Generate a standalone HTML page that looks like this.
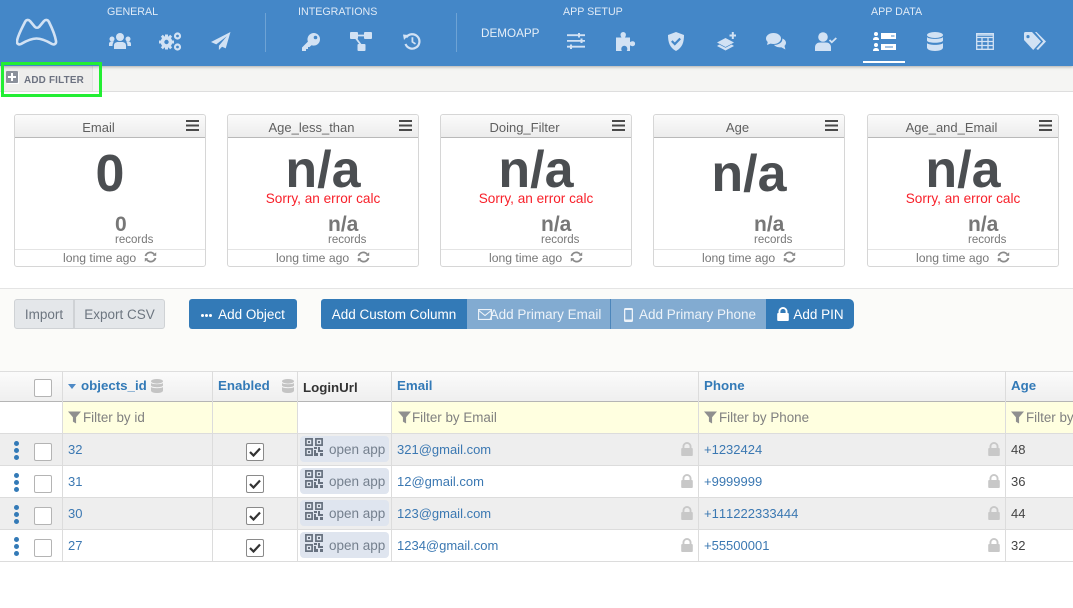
<!DOCTYPE html>
<html><head><meta charset="utf-8">
<style>
html,body{margin:0;padding:0;background:#fff;}
#p{position:relative;width:1073px;height:608px;overflow:hidden;background:#fff;font-family:"Liberation Sans",sans-serif;color:#444;}
#p div,#p span.a,#p svg.a{position:absolute;}
.t{white-space:nowrap;line-height:16px;}
.hl{font-size:10.7px;color:#dfeaf6;}
.ic{color:#d2e2f4;fill:#d2e2f4;}
.card{width:190px;height:151px;background:#fff;border:1px solid #d6d6d6;border-radius:3px;}
.ch{left:0;top:0;width:190px;height:22px;background:linear-gradient(#fbfbfb,#ececec);border-bottom:1px solid #b9b9b9;border-radius:3px 3px 0 0;}
.ct{left:0;top:5px;width:167px;text-align:center;font-size:13px;color:#5f5f5f;}
.hb{left:171px;top:5px;width:13px;height:2px;background:#4a4a4a;box-shadow:0 4.500px 0 #4a4a4a,0 9px 0 #4a4a4a;}
.big{left:0;width:190px;text-align:center;font-weight:bold;color:#4b4e51;white-space:nowrap;}
.err{left:0;top:76px;width:190px;text-align:center;font-size:13.600px;color:#f8202a;}
.sm{top:100px;font-size:21px;font-weight:bold;color:#777;line-height:20px;white-space:nowrap;}
.rec{top:118px;font-size:11.500px;color:#777;line-height:14px;}
.cl{left:0;top:134px;width:190px;height:1px;background:#e4e4e4;}
.lt{left:48px;top:135px;font-size:12.200px;color:#777;}
.btn{top:299px;height:30px;line-height:32px;font-size:13.500px;text-align:center;white-space:nowrap;box-sizing:border-box;}
.b1{background:#337ab7;color:#fff;}
.b2{background:#82abd1;color:#edf3f9;}
.vl{width:1px;top:371px;height:190px;background:#dcdcdc;}
.hd{top:378px;font-size:13.300px;font-weight:bold;color:#337ab7;}
.fl{top:410px;font-size:13.400px;color:#808080;}
.r{left:0;width:1073px;height:31px;border-bottom:1px solid #dcdcdc;}
.lk{font-size:13px;color:#3b78b2;font-kerning:none;}
.cb{left:34px;width:16px;height:16px;border:1px solid #b4b4b4;border-radius:2px;background:#fff;}
.ck{left:246px;width:16px;height:16px;border:1px solid #8a8a8a;border-radius:2px;background:#fff;}
.qr{left:300px;width:89px;height:26px;background:#dfe5ef;border-radius:4px;font-size:13.500px;color:#75808e;line-height:28px;text-indent:29px;white-space:nowrap;}
.dt{left:14px;width:5px;height:5px;background:#337ab7;border-radius:50%;box-shadow:0 7px 0 #337ab7,0 -7px 0 #337ab7;}
</style></head><body>
<div id="p">
<svg width="0" height="0" style="position:absolute"><defs>
<symbol id="lock" viewBox="0 0 12 14"><path d="M1.500 6V4.500a4.500 4.500 0 0 1 9 0V6h.3a1 1 0 0 1 1 1v6a1 1 0 0 1-1 1H1.200a1 1 0 0 1-1-1V7a1 1 0 0 1 1-1zM3.400 6h5.200V4.500a2.600 2.600 0 0 0-5.200 0z"/></symbol>
<symbol id="fun" viewBox="0 0 14 13"><path d="M0 0h14L8.700 6.200V13L5.300 11V6.200z"/></symbol>
<symbol id="db" viewBox="0 0 12 14"><ellipse cx="6" cy="2.300" rx="6" ry="2.300"/><path d="M0 4c1 1.600 11 1.600 12 0v2.400c0 2.400-12 2.400-12 0zM0 8c1 1.600 11 1.600 12 0v3.600C12 14.800 0 14.800 0 11.600z"/></symbol>
<symbol id="qr" viewBox="0 0 18 18"><path fill="none" stroke="#67717f" stroke-width="1.700" d="M.9.900h6.200v6.200H.9zM10.900.900h6.200v6.200h-6.200zM.9 10.900h6.200v6.200H.9z"/><path fill="#67717f" d="M3 3h2v2H3zM13 3h2v2h-2zM3 13h2v2H3zM9 9h3v2H9zM13 9h2v3h3v2h-5zM9 12h2v3h2v3H9zM15 15h3v3h-3z"/></symbol>
<symbol id="rf" viewBox="0 0 13 12"><path fill="none" stroke="#8a8a8a" stroke-width="1.800" d="M1.500 5C2.300 2.300 5 .9 7.500 1.500c1.200.3 2 .9 2.700 1.900M11.500 7c-.8 2.700-3.500 4.100-6 3.500-1.200-.3-2-.9-2.700-1.900"/><path fill="#8a8a8a" d="M8.700 4.700L12.200 4.900 12.200 1.200zM4.300 7.300L.8 7.100.8 10.800z"/></symbol>
</defs></svg>

<!-- top nav -->
<div style="left:0;top:0;width:1073px;height:66px;background:#4487c8;box-shadow:0 1px 3px rgba(0,0,0,.3);z-index:2;">
<svg class="a" style="left:16px;top:18px" width="42" height="29" viewBox="0 0 42 29"><path fill="none" stroke="#d2e2f4" stroke-width="2.600" stroke-linejoin="round" d="M9 4C10 1.500 12.500 1.500 14 3L19 9C20 10 22 10 23 9L28 3C29.500 1.500 32 1.500 33 4C36 10 39 17 40 23C40.500 26 38 27 36 26C31 23 26 20.500 20.500 20.500C15 20.500 10 23 5 26C3 27 .5 26 1 23C2 17 6 10 9 4Z"/></svg>
<span class="a t hl" style="left:107px;top:4px">GENERAL</span>
<span class="a t hl" style="left:298px;top:4px">INTEGRATIONS</span>
<span class="a t hl" style="left:563px;top:4px">APP SETUP</span>
<span class="a t hl" style="left:871px;top:4px">APP DATA</span>
<span class="a t" style="left:481px;top:26px;font-size:11.700px;color:#e6eff8">DEMOAPP</span>
<div style="left:265px;top:13px;width:1px;height:39px;background:#6ea3d5"></div>
<div style="left:456px;top:13px;width:1px;height:39px;background:#6ea3d5"></div>

<!-- people -->
<svg class="a ic" style="left:109px;top:33px" width="22" height="17" viewBox="0 0 22 17"><circle cx="11" cy="4" r="4"/><circle cx="3" cy="6" r="2.500"/><circle cx="19" cy="6" r="2.500"/><path d="M5 16v-3.500C5 10 7 9 9 9h4c2 0 4 1 4 3.500V16zM0 13v-2c0-1.500 1-2.500 2.500-2.500H5c-1 1-1.500 2.500-1.500 4.500zM22 13v-2c0-1.500-1-2.500-2.500-2.500H17c1 1 1.500 2.500 1.500 4.500z"/></svg>
<!-- gears -->
<svg class="a ic" style="left:159px;top:32px" width="23" height="19" viewBox="0 0 23 19"><circle cx="7.500" cy="10" r="4" fill="none" stroke="#d2e2f4" stroke-width="3.600"/><path d="M6 2.500h3v3H6zM6 14.500h3v3H6zM0 8.500h3v3H0zM12 8.500h3v3h-3zM1.800 4.800l2-2 2 2-2 2zM11.200 13.200l2 2-2 2-2-2zM1.800 15.200l2-2 2 2-2 2zM11.200 2.800l2 2-2 2-2-2z"/><circle cx="18.500" cy="4" r="2.500" fill="none" stroke="#d2e2f4" stroke-width="2.200"/><circle cx="18.500" cy="15" r="2.500" fill="none" stroke="#d2e2f4" stroke-width="2.200"/></svg>
<!-- plane -->
<svg class="a ic" style="left:211px;top:32px" width="20" height="18" viewBox="0 0 19 17"><path d="M18.500 0L0 9.500l5 2.200L15 4 7.500 13v4l3-3 3.500 1.500z"/></svg>
<!-- key -->
<svg class="a ic" style="left:302px;top:33px" width="18" height="18" viewBox="0 0 18 18"><path fill-rule="evenodd" d="M11.500 0A6.300 6.300 0 0 1 18 6.300a6.300 6.300 0 0 1-8.500 5.900L7.500 14H6v2H4v2H0v-3.500l5.900-5.900A6.300 6.300 0 0 1 11.500 0zM13.500 2.700a1.800 1.800 0 1 0 0 3.600 1.800 1.800 0 0 0 0-3.600z"/></svg>
<!-- nodes -->
<svg class="a ic" style="left:350px;top:32px" width="22" height="19" viewBox="0 0 22 19"><rect x="0" y="0" width="8" height="7" rx="1"/><rect x="14" y="0" width="8" height="7" rx="1"/><rect x="7.500" y="12" width="8" height="7" rx="1"/><path fill="none" stroke="#d2e2f4" stroke-width="1.800" d="M6 3.500h10M5 5l6 8"/></svg>
<!-- history -->
<svg class="a ic" style="left:403px;top:33px" width="18" height="17" viewBox="0 0 18 17"><path fill="none" stroke="#d2e2f4" stroke-width="2.200" d="M3.200 4.500A7.200 7.200 0 1 1 2.500 11"/><path d="M0 1.500L5.500 2 1 7zM8.500 4.300h1.800v4.200l2.700 1.800-1 1.300-3.500-2.300z"/></svg>
<!-- sliders -->
<svg class="a ic" style="left:567px;top:33px" width="18" height="17" viewBox="0 0 18 17"><path d="M0 1.300h18V3.100H0zM0 7h18v1.800H0zM0 12.800h18v1.800H0z"/><rect x="11" y="0" width="2" height="4.500"/><rect x="13.500" y="5.500" width="2" height="4.500"/><rect x="3" y="11.500" width="2" height="4.500"/></svg>
<!-- puzzle -->
<svg class="a ic" style="left:616px;top:32px" width="20" height="19" viewBox="0 0 20 19"><path d="M0 5.500h5.500C5 4.500 4.500 3.800 4.500 2.700a2.700 2.700 0 0 1 5.400 0c0 1.100-.5 1.800-1 2.800H14v4.600c1-.6 1.600-.9 2.600-.9a2.500 2.500 0 0 1 0 5c-1 0-1.600-.3-2.600-.9V19h-3.300c.6-1 .6-1.500.6-2.300a3 3 0 0 0-6 0c0 .8 0 1.300.6 2.300H0z"/></svg>
<!-- shield -->
<svg class="a ic" style="left:668px;top:32px" width="16" height="19" viewBox="0 0 16 19"><path d="M8 0l8 3c0 7-1.500 12.500-8 16C1.500 15.500 0 10 0 3z"/><path fill="none" stroke="#4487c8" stroke-width="2.200" d="M3.800 9l3 3 5.400-5.500"/></svg>
<!-- layers plus -->
<svg class="a ic" style="left:717px;top:32px" width="19" height="19" viewBox="0 0 19 19"><path d="M0 10.500L8.500 6l8.500 4.500-8.500 4.500zM2.300 12.500L0 14l8.500 4.500L17 14l-2.300-1.500-6.200 3.300z"/><path d="M12.500 2.500h2.300V0h2v2.500h2.200v2h-2.200V7h-2V4.500h-2.300z"/></svg>
<!-- comments -->
<svg class="a ic" style="left:766px;top:33px" width="20" height="17" viewBox="0 0 20 17"><ellipse cx="7.500" cy="5.500" rx="7.500" ry="5.500"/><path d="M2 8l-1 4 5-2z"/><path d="M16.300 5.500c2.200.8 3.700 2.400 3.700 4.300 0 1.200-.6 2.300-1.500 3.100l.9 3.600-4.200-2.200c-3 .4-5.900-.6-7.200-2.500 4.500.3 9-2.500 8.300-6.300z"/></svg>
<!-- user check -->
<svg class="a ic" style="left:815px;top:32px" width="22" height="19" viewBox="0 0 22 19"><circle cx="8" cy="5" r="4.800"/><path d="M0 19v-3.500C0 12 2.500 10.500 5 10.500h6c2.500 0 5 1.500 5 5V19z"/><path fill="none" stroke="#d2e2f4" stroke-width="1.800" d="M14.500 8l2.300 2.300L21.300 6"/></svg>
<!-- list active -->
<svg class="a" fill="#fff" style="left:873px;top:32px" width="23" height="19" viewBox="0 0 23 19"><circle cx="3" cy="2" r="2"/><path d="M0 8c0-2 1-3 3-3s3 1 3 3z"/><circle cx="3" cy="13" r="2"/><path d="M0 19c0-2 1-3 3-3s3 1 3 3z"/><path fill-rule="evenodd" d="M8 1h15v6H8zM18 3.500v1h3.500v-1zM8 12h15v6H8zM12 14.500v1h8v-1z"/></svg>
<div style="left:863px;top:61px;width:42px;height:2px;background:#fff"></div>
<!-- database -->
<svg class="a ic" style="left:927px;top:32px" width="16" height="19" viewBox="0 0 16 19"><ellipse cx="8" cy="3" rx="8" ry="3"/><path d="M0 5c1.500 2.500 14.500 2.500 16 0v3.500c0 3-16 3-16 0zM0 11c1.500 2.500 14.500 2.500 16 0v4.500c0 4.600-16 4.600-16 0z"/></svg>
<!-- table -->
<svg class="a ic" style="left:976px;top:33px" width="18" height="17" viewBox="0 0 18 17"><path fill="none" stroke="#d2e2f4" stroke-width="1.300" d="M.7.700h16.600v15.600H.7zM.7 4.500h16.600M.7 8.500h16.600M.7 12.500h16.600M6 4v12M12 4v12"/><path d="M0 0h18v3H0z" opacity=".7"/></svg>
<!-- tags -->
<svg class="a ic" style="left:1024px;top:32px" width="22" height="19" viewBox="0 0 22 19"><path fill-rule="evenodd" d="M1.500 0H8l9 9.500-7.800 8.500L0 8V1.500A1.500 1.500 0 0 1 1.500 0zM4 3a1.600 1.600 0 1 0 0 3.200A1.600 1.600 0 0 0 4 3z"/><path d="M11 0h1.500L22 9.500 14 18l-1.700-1.100 6.800-7.400z"/></svg>
</div>

<!-- filter bar -->
<div style="left:0;top:66px;width:1073px;height:25px;background:#f5f5f3;border-bottom:1px solid #dedede"></div>
<div style="left:0;top:66px;width:92px;height:25px;background:#eeeeec;border-right:1px solid #e2e2e2"></div>
<div style="left:6px;top:71px;width:12px;height:12px;background:#8b919b;border-radius:1px;box-shadow:1px 1px 0 #fff"></div>
<div style="left:8px;top:76px;width:8px;height:2px;background:#fff"></div>
<div style="left:11px;top:73px;width:2px;height:8px;background:#fff"></div>
<span class="a t" style="left:24px;top:73px;font-size:9.900px;font-weight:bold;color:#6c7280;letter-spacing:.2px">ADD FILTER</span>
<div style="left:1px;top:62px;width:95px;height:29px;border:3px solid #22ee33;z-index:3"></div>

<!-- cards -->
<div class="card" style="left:14px;top:114px"><div class="ch"></div><span class="a t ct">Email</span><div class="hb"></div>
<div class="big" style="top:29px;font-size:52px;line-height:60px">0</div>
<div class="sm" style="left:100px">0</div><span class="a t rec" style="left:100px">records</span><div class="cl"></div><span class="a t lt">long time ago</span><svg class="a" style="left:129px;top:136px" width="13" height="12"><use href="#rf"/></svg></div>

<div class="card" style="left:227px;top:114px"><div class="ch"></div><span class="a t ct">Age_less_than</span><div class="hb"></div>
<div class="big" style="top:25px;font-size:52px;line-height:60px">n/a</div><span class="a t err">Sorry, an error calc</span>
<div class="sm" style="left:100px">n/a</div><span class="a t rec" style="left:100px">records</span><div class="cl"></div><span class="a t lt">long time ago</span><svg class="a" style="left:129px;top:136px" width="13" height="12"><use href="#rf"/></svg></div>

<div class="card" style="left:440px;top:114px"><div class="ch"></div><span class="a t ct">Doing_Filter</span><div class="hb"></div>
<div class="big" style="top:25px;font-size:52px;line-height:60px">n/a</div><span class="a t err">Sorry, an error calc</span>
<div class="sm" style="left:100px">n/a</div><span class="a t rec" style="left:100px">records</span><div class="cl"></div><span class="a t lt">long time ago</span><svg class="a" style="left:129px;top:136px" width="13" height="12"><use href="#rf"/></svg></div>

<div class="card" style="left:653px;top:114px"><div class="ch"></div><span class="a t ct">Age</span><div class="hb"></div>
<div class="big" style="top:29px;font-size:52px;line-height:60px">n/a</div>
<div class="sm" style="left:100px">n/a</div><span class="a t rec" style="left:100px">records</span><div class="cl"></div><span class="a t lt">long time ago</span><svg class="a" style="left:129px;top:136px" width="13" height="12"><use href="#rf"/></svg></div>

<div class="card" style="left:867px;top:114px"><div class="ch"></div><span class="a t ct">Age_and_Email</span><div class="hb"></div>
<div class="big" style="top:25px;font-size:52px;line-height:60px">n/a</div><span class="a t err">Sorry, an error calc</span>
<div class="sm" style="left:100px">n/a</div><span class="a t rec" style="left:100px">records</span><div class="cl"></div><span class="a t lt">long time ago</span><svg class="a" style="left:129px;top:136px" width="13" height="12"><use href="#rf"/></svg></div>

<!-- action area -->
<div style="left:0;top:288px;width:1073px;height:83px;background:#fbfbf9;border-top:1px solid #e4e4e4;box-sizing:border-box"></div>
<div class="btn" style="left:14px;width:60px;background:#e4e7ea;color:#6d7680;border:1px solid #cfd2d5;border-radius:3px 0 0 3px;line-height:30px">Import</div>
<div class="btn" style="left:74px;width:91px;background:#e4e7ea;color:#6d7680;border:1px solid #cfd2d5;border-left:1px solid #cfd2d5;border-radius:0 3px 3px 0;line-height:30px">Export CSV</div>
<div class="btn b1" style="left:189px;width:108px;border-radius:3px;padding-left:17px">Add Object</div>
<div style="left:201px;top:314px;width:3px;height:3px;border-radius:50%;background:#fff;box-shadow:4px 0 0 #fff,8px 0 0 #fff"></div>
<div class="btn b1" style="left:321px;width:146px;border-radius:3px 0 0 3px">Add Custom Column</div>
<div class="btn b2" style="left:467px;width:144px;border-right:1px solid #4c86bb;padding-left:14px">Add Primary Email</div>
<svg class="a" style="left:478px;top:309px" width="14" height="11" viewBox="0 0 14 11"><path fill="none" stroke="#edf3f9" stroke-width="1.100" d="M.6.600h12.800v9.800H.6zM.8 1.500L7 6.500l6.200-5"/></svg>
<div class="btn b2" style="left:611px;width:155px;padding-left:18px">Add Primary Phone</div>
<svg class="a" style="left:624px;top:308px" width="9" height="14" viewBox="0 0 9 14"><path fill="#edf3f9" fill-rule="evenodd" d="M1.500 0h6A1.500 1.500 0 0 1 9 1.500v11A1.500 1.500 0 0 1 7.500 14h-6A1.500 1.500 0 0 1 0 12.500v-11A1.500 1.500 0 0 1 1.500 0zM1.300 2v9.500h6.400V2z"/></svg>
<div class="btn b1" style="left:766px;width:88px;border-radius:0 5px 5px 0;padding-left:17px">Add PIN</div>
<svg class="a" fill="#fff" style="left:777px;top:307px" width="12" height="14"><use href="#lock"/></svg>

<!-- table head -->
<div style="left:0;top:371px;width:1073px;background:linear-gradient(#fbfbfb,#efefef);border-top:1px solid #dedede;border-bottom:1px solid #b5b5b5;height:29px"></div>
<div style="left:0;top:402px;width:1073px;background:#fff;border-bottom:1px solid #dcdcdc;box-sizing:border-box;height:32px"></div>
<div style="left:63px;top:402px;width:1010px;height:31px;background:#ffffe0"></div>
<div style="left:298px;top:402px;width:93px;height:31px;background:#fff"></div>

<!-- rows -->
<div class="r" style="top:434px;background:#eeeeee"></div>
<div class="r" style="top:466px;background:#fff"></div>
<div class="r" style="top:498px;background:#eeeeee"></div>
<div class="r" style="top:530px;background:#fff"></div>

<div class="vl" style="left:62px"></div><div class="vl" style="left:212px"></div><div class="vl" style="left:297px"></div><div class="vl" style="left:391px"></div><div class="vl" style="left:698px"></div><div class="vl" style="left:1005px"></div>

<div class="cb" style="top:379px"></div>
<div style="left:68px;top:384px;border:4px solid transparent;border-top:5px solid #4f8ac6;border-bottom:0;"></div>
<span class="a t hd" style="left:81px">objects_id</span>
<svg class="a" fill="#c4c4c4" style="left:151px;top:379px" width="12" height="14"><use href="#db"/></svg>
<span class="a t hd" style="left:218px">Enabled</span>
<svg class="a" fill="#c4c4c4" style="left:282px;top:379px" width="12" height="14"><use href="#db"/></svg>
<span class="a t hd" style="left:303px;color:#333;top:380px">LoginUrl</span>
<span class="a t hd" style="left:397px">Email</span>
<span class="a t hd" style="left:704px">Phone</span>
<span class="a t hd" style="left:1011px">Age</span>

<svg class="a" fill="#8f8f8f" style="left:68px;top:411px" width="13" height="13"><use href="#fun"/></svg><span class="a t fl" style="left:83px">Filter by id</span>
<svg class="a" fill="#8f8f8f" style="left:398px;top:411px" width="13" height="13"><use href="#fun"/></svg><span class="a t fl" style="left:412px">Filter by Email</span>
<svg class="a" fill="#8f8f8f" style="left:704px;top:411px" width="13" height="13"><use href="#fun"/></svg><span class="a t fl" style="left:719px">Filter by Phone</span>
<svg class="a" fill="#8f8f8f" style="left:1011px;top:411px" width="13" height="13"><use href="#fun"/></svg><span class="a t fl" style="left:1026px">Filter by Age</span>

<!-- row 1 -->
<div class="dt" style="top:448px"></div><div class="cb" style="top:443px"></div>
<span class="a t lk" style="left:68px;top:442px">32</span>
<div class="ck" style="top:443px"></div><svg class="a" style="left:249px;top:447px" width="12" height="10" viewBox="0 0 12 10"><path fill="none" stroke="#333" stroke-width="2.200" d="M1 5l3.500 3.500L11 1.500"/></svg>
<div class="qr" style="top:436px">open app</div><svg class="a" style="left:305px;top:438px" width="18" height="18"><use href="#qr"/></svg>
<span class="a t lk" style="left:397px;top:442px">321@gmail.com</span><svg class="a" fill="#c8c8c8" style="left:681px;top:442px" width="12" height="14"><use href="#lock"/></svg>
<span class="a t lk" style="left:704px;top:442px">+1232424</span><svg class="a" fill="#c8c8c8" style="left:988px;top:442px" width="12" height="14"><use href="#lock"/></svg>
<span class="a t" style="left:1011px;top:442px;font-size:13px">48</span>

<!-- row 2 -->
<div class="dt" style="top:480px"></div><div class="cb" style="top:475px"></div>
<span class="a t lk" style="left:68px;top:474px">31</span>
<div class="ck" style="top:475px"></div><svg class="a" style="left:249px;top:479px" width="12" height="10" viewBox="0 0 12 10"><path fill="none" stroke="#333" stroke-width="2.200" d="M1 5l3.500 3.500L11 1.500"/></svg>
<div class="qr" style="top:468px">open app</div><svg class="a" style="left:305px;top:470px" width="18" height="18"><use href="#qr"/></svg>
<span class="a t lk" style="left:397px;top:474px">12@gmail.com</span><svg class="a" fill="#c8c8c8" style="left:681px;top:474px" width="12" height="14"><use href="#lock"/></svg>
<span class="a t lk" style="left:704px;top:474px">+9999999</span><svg class="a" fill="#c8c8c8" style="left:988px;top:474px" width="12" height="14"><use href="#lock"/></svg>
<span class="a t" style="left:1011px;top:474px;font-size:13px">36</span>

<!-- row 3 -->
<div class="dt" style="top:512px"></div><div class="cb" style="top:507px"></div>
<span class="a t lk" style="left:68px;top:506px">30</span>
<div class="ck" style="top:507px"></div><svg class="a" style="left:249px;top:511px" width="12" height="10" viewBox="0 0 12 10"><path fill="none" stroke="#333" stroke-width="2.200" d="M1 5l3.500 3.500L11 1.500"/></svg>
<div class="qr" style="top:500px">open app</div><svg class="a" style="left:305px;top:502px" width="18" height="18"><use href="#qr"/></svg>
<span class="a t lk" style="left:397px;top:506px">123@gmail.com</span><svg class="a" fill="#c8c8c8" style="left:681px;top:506px" width="12" height="14"><use href="#lock"/></svg>
<span class="a t lk" style="left:704px;top:506px">+111222333444</span><svg class="a" fill="#c8c8c8" style="left:988px;top:506px" width="12" height="14"><use href="#lock"/></svg>
<span class="a t" style="left:1011px;top:506px;font-size:13px">44</span>

<!-- row 4 -->
<div class="dt" style="top:544px"></div><div class="cb" style="top:539px"></div>
<span class="a t lk" style="left:68px;top:538px">27</span>
<div class="ck" style="top:539px"></div><svg class="a" style="left:249px;top:543px" width="12" height="10" viewBox="0 0 12 10"><path fill="none" stroke="#333" stroke-width="2.200" d="M1 5l3.500 3.500L11 1.500"/></svg>
<div class="qr" style="top:532px">open app</div><svg class="a" style="left:305px;top:534px" width="18" height="18"><use href="#qr"/></svg>
<span class="a t lk" style="left:397px;top:538px">1234@gmail.com</span><svg class="a" fill="#c8c8c8" style="left:681px;top:538px" width="12" height="14"><use href="#lock"/></svg>
<span class="a t lk" style="left:704px;top:538px">+55500001</span><svg class="a" fill="#c8c8c8" style="left:988px;top:538px" width="12" height="14"><use href="#lock"/></svg>
<span class="a t" style="left:1011px;top:538px;font-size:13px">32</span>
</div>
</body></html>
